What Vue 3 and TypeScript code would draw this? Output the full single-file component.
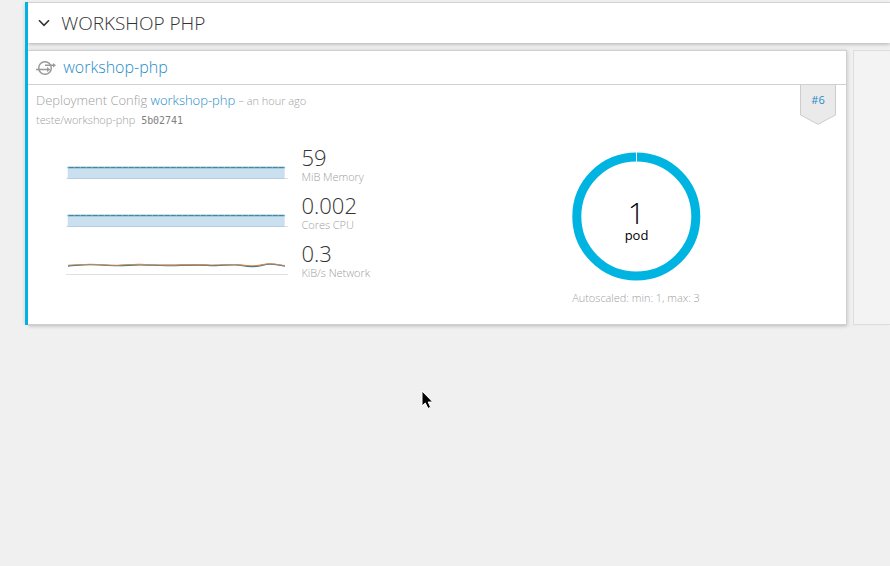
<script setup lang="ts">
interface Metric {
  value: string
  label: string
  kind: 'area' | 'line'
}

const metrics: Metric[] = [
  { value: '59', label: 'MiB Memory', kind: 'area' },
  { value: '0.002', label: 'Cores CPU', kind: 'area' },
  { value: '0.3', label: 'KiB/s Network', kind: 'line' },
]
</script>

<template>
  <main class="overview">
    <section class="app-group">
      <header class="group-header">
        <svg class="chevron" width="12" height="8" viewBox="0 0 12 8">
          <path d="M1 1.2 6 6.3 11 1.2" />
        </svg>
        <h1>WORKSHOP PHP</h1>
      </header>
      <div class="tiles">
        <article class="tile">
          <header class="tile-header">
            <svg class="service" width="20" height="16" viewBox="0 0 20 16">
              <circle cx="9" cy="8" r="6.300" />
              <path d="M0 9.5H12M9 5.300H17" />
              <path class="head" d="M11 7 14.300 9.5 11 12ZM17 3 20 5.300 17 7.600Z" />
            </svg>
            <a class="service-name">workshop-php</a>
          </header>
          <div class="tile-body">
            <div class="deployment">
              <div class="info">
                <p class="config">Deployment Config <a>workshop-php</a> <small>– an hour ago</small></p>
                <p class="image"><span>teste/workshop-php</span><code>5b02741</code></p>
              </div>
              <div class="badge">
                <svg width="36" height="41" viewBox="0 0 36 41">
                  <path d="M.5 0V30L18 39.300 35.500 30V0" />
                </svg>
                <a>#6</a>
              </div>
            </div>
            <div class="content">
              <div class="metrics">
                <div v-for="metric in metrics" :key="metric.label" class="metric">
                  <svg class="spark" width="222" height="32" viewBox="0 0 222 32">
                    <template v-if="metric.kind === 'area'">
                      <rect class="area" x="1.700" y="18" width="217" height="12" />
                      <path class="axis" d="M0 29.500H222" />
                      <path class="base" d="M1.700 29.500H218.700" />
                      <path class="trend" d="M1.700 18.500H218.700" />
                      <path class="dots" d="M1.700 18.500H218.700" />
                    </template>
                    <template v-else>
                      <path class="axis" d="M0 29.500H222" />
                      <path class="received" d="M2 21C10 20.500 16 19.700 24 19.700S43 20.600 52 20.600 64 19.900 74 19.900 92 20.700 104 20.500 122 20 132 20 142 20.700 150 20.500 161 19.800 169 19.800 177 21.800 187 21.600 197 19.100 204 19.200 213 20.400 219 21" />
                      <path class="sent" d="M2 20.200C10 20 16 19.200 24 19.200S43 20.300 52 20.200 64 19.300 74 19.400 92 20.300 104 20.100 122 19.600 132 19.600 142 20.300 150 20 161 19.400 169 19.500 177 21 187 20.800 197 18.700 204 18.800 213 19.900 219 20.500" />
                    </template>
                  </svg>
                  <div class="reading">
                    <strong>{{ metric.value }}</strong>
                    <span>{{ metric.label }}</span>
                  </div>
                </div>
              </div>
              <div class="pods">
                <svg class="donut" width="130" height="130" viewBox="0 0 130 130">
                  <circle cx="65.300" cy="65.500" r="59.500" />
                  <path d="M65.500 0V11" />
                  <text class="count" x="65.300" y="73">1</text>
                  <text class="unit" x="65.500" y="89">pod</text>
                </svg>
                <p class="scaling">Autoscaled: min: 1, max: 3</p>
              </div>
            </div>
          </div>
        </article>
        <aside class="add-tile"></aside>
      </div>
    </section>
    <svg class="cursor" width="13" height="20" viewBox="0 0 13 20">
      <path d="M1 1V16L4.300 13 7 18.500 9.600 17.200 7.200 12H11.700Z" />
    </svg>
  </main>
</template>

<style>
body {
  background: #f0f0f0;
  overflow: hidden;
}
</style>

<style scoped>
.overview {
  box-sizing: border-box;
  height: 566px;
  padding: 2px 0 0 25px;
  overflow: hidden;
  font-family: "Open Sans", sans-serif;
  font-weight: 300;
  color: #333;
}
h1, p { margin: 0; font-weight: 300; }
.app-group {
  box-sizing: border-box;
  height: 323px;
  border-left: 3px solid #00b4e0;
  box-shadow: -2px 0 3px -1px rgba(0, 0, 0, .1);
}
.group-header {
  box-sizing: border-box;
  display: flex;
  align-items: center;
  height: 41px;
  padding-left: 10px;
  border-top: 1px solid #d4d4d4;
  background: #fff;
  box-shadow: 0 1px 4px rgba(0, 0, 0, .28);
  clip-path: inset(0 0 -8px 0);
}
.chevron { fill: none; stroke: #333; stroke-width: 1.600; }
h1 {
  margin-left: 11.300px;
  font-size: 19px;
  line-height: 40px;
  letter-spacing: -.02px;
}
.tiles { display: flex; gap: 6px; margin-top: 7px; }
.tile {
  box-sizing: border-box;
  width: 819px;
  height: 275px;
  border: solid #d0d0d0;
  border-width: 1px 1px 1px 0;
  background: #fff;
  box-shadow: 0 1px 4px rgba(0, 0, 0, .22);
  clip-path: inset(-8px -8px -8px 0);
}
.add-tile {
  flex: 1;
  border: solid #ddd;
  border-width: 1px 0 1px 1px;
  background: #f3f3f3;
}
a { color: #278bc8; }
.tile-header {
  display: flex;
  align-items: center;
  height: 33px;
  padding-left: 8px;
  border-bottom: 1px solid #d0d0d0;
}
.service { fill: none; stroke: #999; stroke-width: 1.500; }
.service .head { fill: #999; stroke: none; }
.service-name { margin-left: 7.300px; padding-bottom: 1px; font-size: 16px; line-height: 32px; }
.tile-body { padding: 0 10px 0 8px; }
.deployment { display: flex; justify-content: space-between; height: 56px; }
.info { padding-top: 5px; color: #a0a0a0; }
.config { font-size: 13px; line-height: 20px; letter-spacing: -.02px; }
.config small { font-size: 11px; letter-spacing: -.04px; }
.image { display: flex; gap: 6px; font-size: 11px; line-height: 18px; letter-spacing: -.05px; }
.image code { font: 10px/20px "DejaVu Sans Mono", monospace; color: #808080; }
.badge { display: grid; width: 36px; height: 41px; }
.badge > * { grid-area: 1 / 1; }
.badge path { fill: #eaeaea; stroke: #ccc; }
.badge a { font-size: 11px; font-weight: 400; line-height: 30px; text-align: center; }
.content { display: flex; }
.metrics { box-sizing: border-box; width: 504px; padding: 8px 0 0 30px; }
.metric { display: flex; height: 48px; gap: 13.500px; }
.spark { flex: none; }
.area { fill: #cbe0ef; }
.spark path { fill: none; }
.axis { stroke: #e0e0e0; }
.base { stroke: #b6cfe0; }
.trend { stroke: #3f87a6; stroke-width: 1.400; }
.dots { stroke: #8fb8c8; stroke-dasharray: 1 5; }
.received { stroke: #35718f; stroke-width: 1.300; }
.sent { stroke: #d08a50; stroke-width: 1.100; }
.reading { display: flex; flex-direction: column; }
.reading strong { font-size: 22px; font-weight: 300; line-height: 17px; }
.reading span { font-size: 11px; line-height: 18px; margin-top: 2px; color: #a0a0a0; letter-spacing: -.05px; }
.pods { display: flex; flex-direction: column; align-items: center; width: 192px; padding-top: 10px; }
.donut circle { fill: none; stroke: #00b4e2; stroke-width: 9; }
.donut path { stroke: #fff; stroke-width: 1; }
.donut text { fill: #000; text-anchor: middle; }
.count { font-size: 30px; }
.unit { font-size: 13px; font-weight: 400; }
.scaling { font-size: 11px; line-height: 20px; margin-top: 7px; color: #a0a0a0; letter-spacing: -.03px; }
.cursor { position: absolute; left: 421px; top: 390px; }
.cursor path { fill: #000; stroke: #fff; }
</style>
